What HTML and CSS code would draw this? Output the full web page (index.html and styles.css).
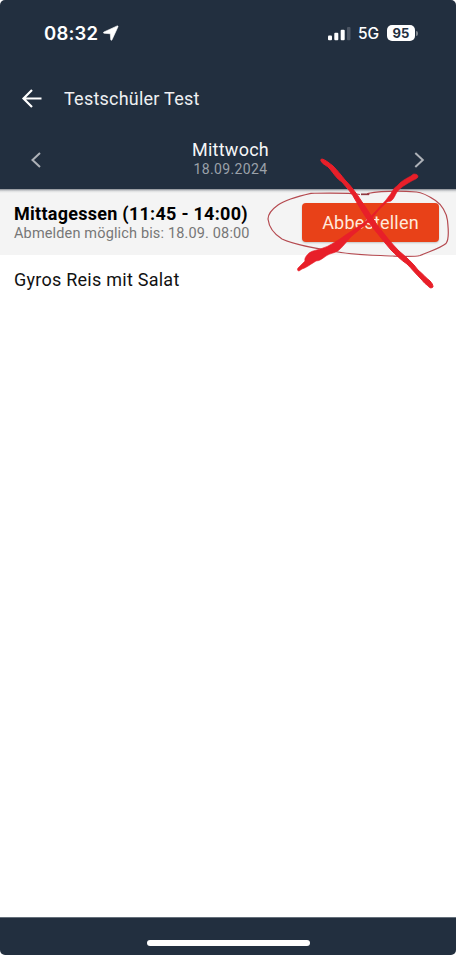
FILE: index.html
```html
<!DOCTYPE html>
<html lang="de">
<head>
<meta charset="utf-8">
<meta name="viewport" content="width=device-width, initial-scale=1">
<title>Testschüler Test</title>
<link rel="stylesheet" href="styles.css">
</head>
<body>
<div class="screen">
  <header class="header">
    <div class="status">
      <div class="clock"><span class="time">08:32</span>
        <svg class="location" width="16" height="16" viewBox="0 0 16 16"><path d="M14.200.9.900 7c-.8.400-.6 1.200.2 1.300l6.200.4.400 5.900c.1.900.9 1 1.300.2L15 1.700c.2-.6-.2-1-.8-.8Z" fill="#fff" stroke="#fff" stroke-width=".6"/></svg>
      </div>
      <div class="indicators">
        <svg class="signal" width="24" height="15" viewBox="0 0 24 15"><g fill="#fff"><rect x="0" y="9.5" width="4" height="4.800" rx="1"/><rect x="6.300" y="6.800" width="4" height="7.500" rx="1"/><rect x="12.700" y="3.700" width="4" height="10.600" rx="1"/></g><rect x="19" y="1" width="3.500" height="13.300" rx="1" fill="#4c5664"/></svg>
        <span class="network">5G</span>
        <span class="battery">95</span><span class="battery-tip"></span>
      </div>
    </div>
    <div class="titlebar">
      <svg class="back" width="22" height="20" viewBox="0 0 22 20"><path d="M20.500 9.500H2.500M11 1 2.500 9.500 11 18" fill="none" stroke="#fff" stroke-width="2.200"/></svg>
      <h1 class="title">Testschüler Test</h1>
    </div>
    <div class="daybar">
      <svg class="chevron" width="12" height="16" viewBox="0 0 12 16"><path d="M10 1 2.500 8l7.500 7" fill="none" stroke="#aeb2b8" stroke-width="2"/></svg>
      <div class="day"><div class="weekday">Mittwoch</div><div class="date">18.09.2024</div></div>
      <svg class="chevron" width="12" height="16" viewBox="0 0 12 16"><path d="m2.300 1 7.500 7-7.500 7" fill="none" stroke="#aeb2b8" stroke-width="2"/></svg>
    </div>
  </header>
  <main class="content">
    <section class="meal">
      <div class="meal-info">
        <h2 class="meal-name">Mittagessen (11:45 - 14:00)</h2>
        <p class="deadline">Abmelden möglich bis: 18.09. 08:00</p>
      </div>
      <button class="cancel" type="button">Abbestellen</button>
      <svg class="marking" width="200" height="160" viewBox="0 0 200 160">
        <path d="M104 54.500C93 52.500 73 53 55 53.300 43 56 29 60 22 65 15 70 12 74 12 79 13 88 18 94 26 99c13 6 32 9 51 12 17 4 38 4 60 5 11 .5 21 1 27-.5 9-4 20-7 26-12 4-5 2-16 1.500-23-1-8-6-16-12-20-6-4-12-8-19-8.500-13-1-35-1-49 1.500l2 .8" fill="none" stroke="#b54a50" stroke-width="1.200" stroke-linejoin="round"/>
        <path d="M105 54.300h8" stroke="#903942" stroke-width="1.700"/>
        <g fill="#e81f29" stroke="#e81f29" stroke-linejoin="round">
          <path stroke-width="1" d="M66 19c3 .5 7 4 11 7 4 4 8 9 12 14 6 6 12 14 17 22 6 8 10 16 16 24 7 9 13 17 21 25 7 6 14 12 19 19 5 4 8 8 12 11 2 2 3 4 3 6l-2 1c-2-.5-3-2-4-3-3-2-4-4-6-6-5-5-10-11-14-15-6-4-11-9-16-14-7-8-12-15-18-22-6-9-12-18-17-27-4-8-9-13-14-19-5-3-8-8-12-13-3-4-7-4-9-8-.5-1 0-2 1-2Z"/>
          <path stroke-width=".6" d="M158 34c3 0 4 1 4 3-1 2-5 3-8 5-5 3-9 5-13 10-2 3-3 7-6 9-2 1-4 0-6 3-5 4-8 8-12 13-6 7-13 12-20 18-5 4-8 10-14 15-3 3-9 3-13 6-3 2-6 5-10 5-5 3-10 7-14 8l-3 2c-1.500 0-2-1.500-1-3l4-4 3-3c-1-3 2-6 4-8 4-3 10-3 14-5 7-2 11-6 17-9 8-6 15-10 22-15 6-4 9-8 14-13 4-5 9-9 13-15 3-3 4-8 8-10 4-5 10-8 14-10 1-1 2-2 3-2Z"/>
        </g>
      </svg>
    </section>
    <p class="dish">Gyros Reis mit Salat</p>
  </main>
  <footer class="footer"><div class="home-indicator"></div></footer>
</div>
</body>
</html>
```
FILE: styles.css
```css
* { box-sizing: border-box; }
body { margin: 0; background: #fff; font-family: Roboto, "Liberation Sans", sans-serif; }
h1, h2, p { margin: 0; font-weight: 400; white-space: nowrap; }
svg { display: block; flex: none; }
.screen { width: 456px; height: 955px; display: flex; flex-direction: column; overflow: hidden; background: #fff; }
.header { height: 189px; flex: none; background: #222f3f; color: #fff; border-radius: 5px 5px 0 0; }
.status { height: 66px; display: flex; justify-content: space-between; padding: 0 38px 0 44px; font-family: Inter, sans-serif; align-items: center; }
.clock { display: flex; align-items: center; gap: 5px; }
.time { font-size: 18.500px; font-weight: 600; line-height: 24px; letter-spacing: .2px; }
.indicators { display: flex; align-items: center; }
.signal { margin-right: 6px; }
.network { width: 29px; font-size: 15.500px; font-weight: 500; }
.battery { width: 28px; height: 16px; border-radius: 5px; background: #fff; color: #222f3f; font-size: 13px; font-weight: 700; line-height: 16px; text-align: center; }
.battery-tip { width: 2px; height: 5px; margin-left: 1px; border-radius: 0 2px 2px 0; background: #7b838c; }
.titlebar { height: 66px; display: flex; align-items: center; padding-left: 21px; }
.title { margin-left: 21px; font-size: 18px; line-height: 24px; letter-spacing: .23px; color: #eef0f2; }
.daybar { height: 57px; display: flex; justify-content: space-between; align-items: flex-start; padding: 7px 31px 0 30px; }
.chevron { margin-top: 13px; }
.day { padding-left: 6px; text-align: center; }
.weekday { font-size: 18px; line-height: 22px; letter-spacing: .25px; color: #f5f6f7; }
.date { font-size: 14px; line-height: 16px; letter-spacing: .35px; color: #9ba1a9; }
.content { flex: 1; }
.meal { position: relative; height: 66px; display: flex; justify-content: space-between; padding: 14px 17px 0 14px; background: linear-gradient(#858a91, #dcdddf 2px, #f4f4f4 4px); }
.meal-name { font-size: 18px; font-weight: 700; line-height: 21px; letter-spacing: .27px; color: #000; }
.deadline { padding-top: 1px; font-size: 14.500px; line-height: 17px; letter-spacing: .15px; color: #777; }
.cancel { width: 137px; height: 39px; padding: 0; border: 0; border-radius: 4px; background: #e84118; color: #ffe9dc; font: 400 18px/39px Roboto, sans-serif; letter-spacing: .2px; box-shadow: 0 1px 2px rgba(0, 0, 0, .2); }
.marking { position: absolute; left: 256px; top: -49px; pointer-events: none; }
.dish { padding: 13px 14px; font-size: 18px; line-height: 24px; letter-spacing: .25px; color: #111; }
.footer { height: 38px; display: flex; justify-content: center; padding-top: 22px; background: #222f3f; border-top: 1px solid #65707b; border-radius: 0 0 5px 5px; }
.home-indicator { width: 163px; height: 6px; border-radius: 3px; background: #fff; }
```
